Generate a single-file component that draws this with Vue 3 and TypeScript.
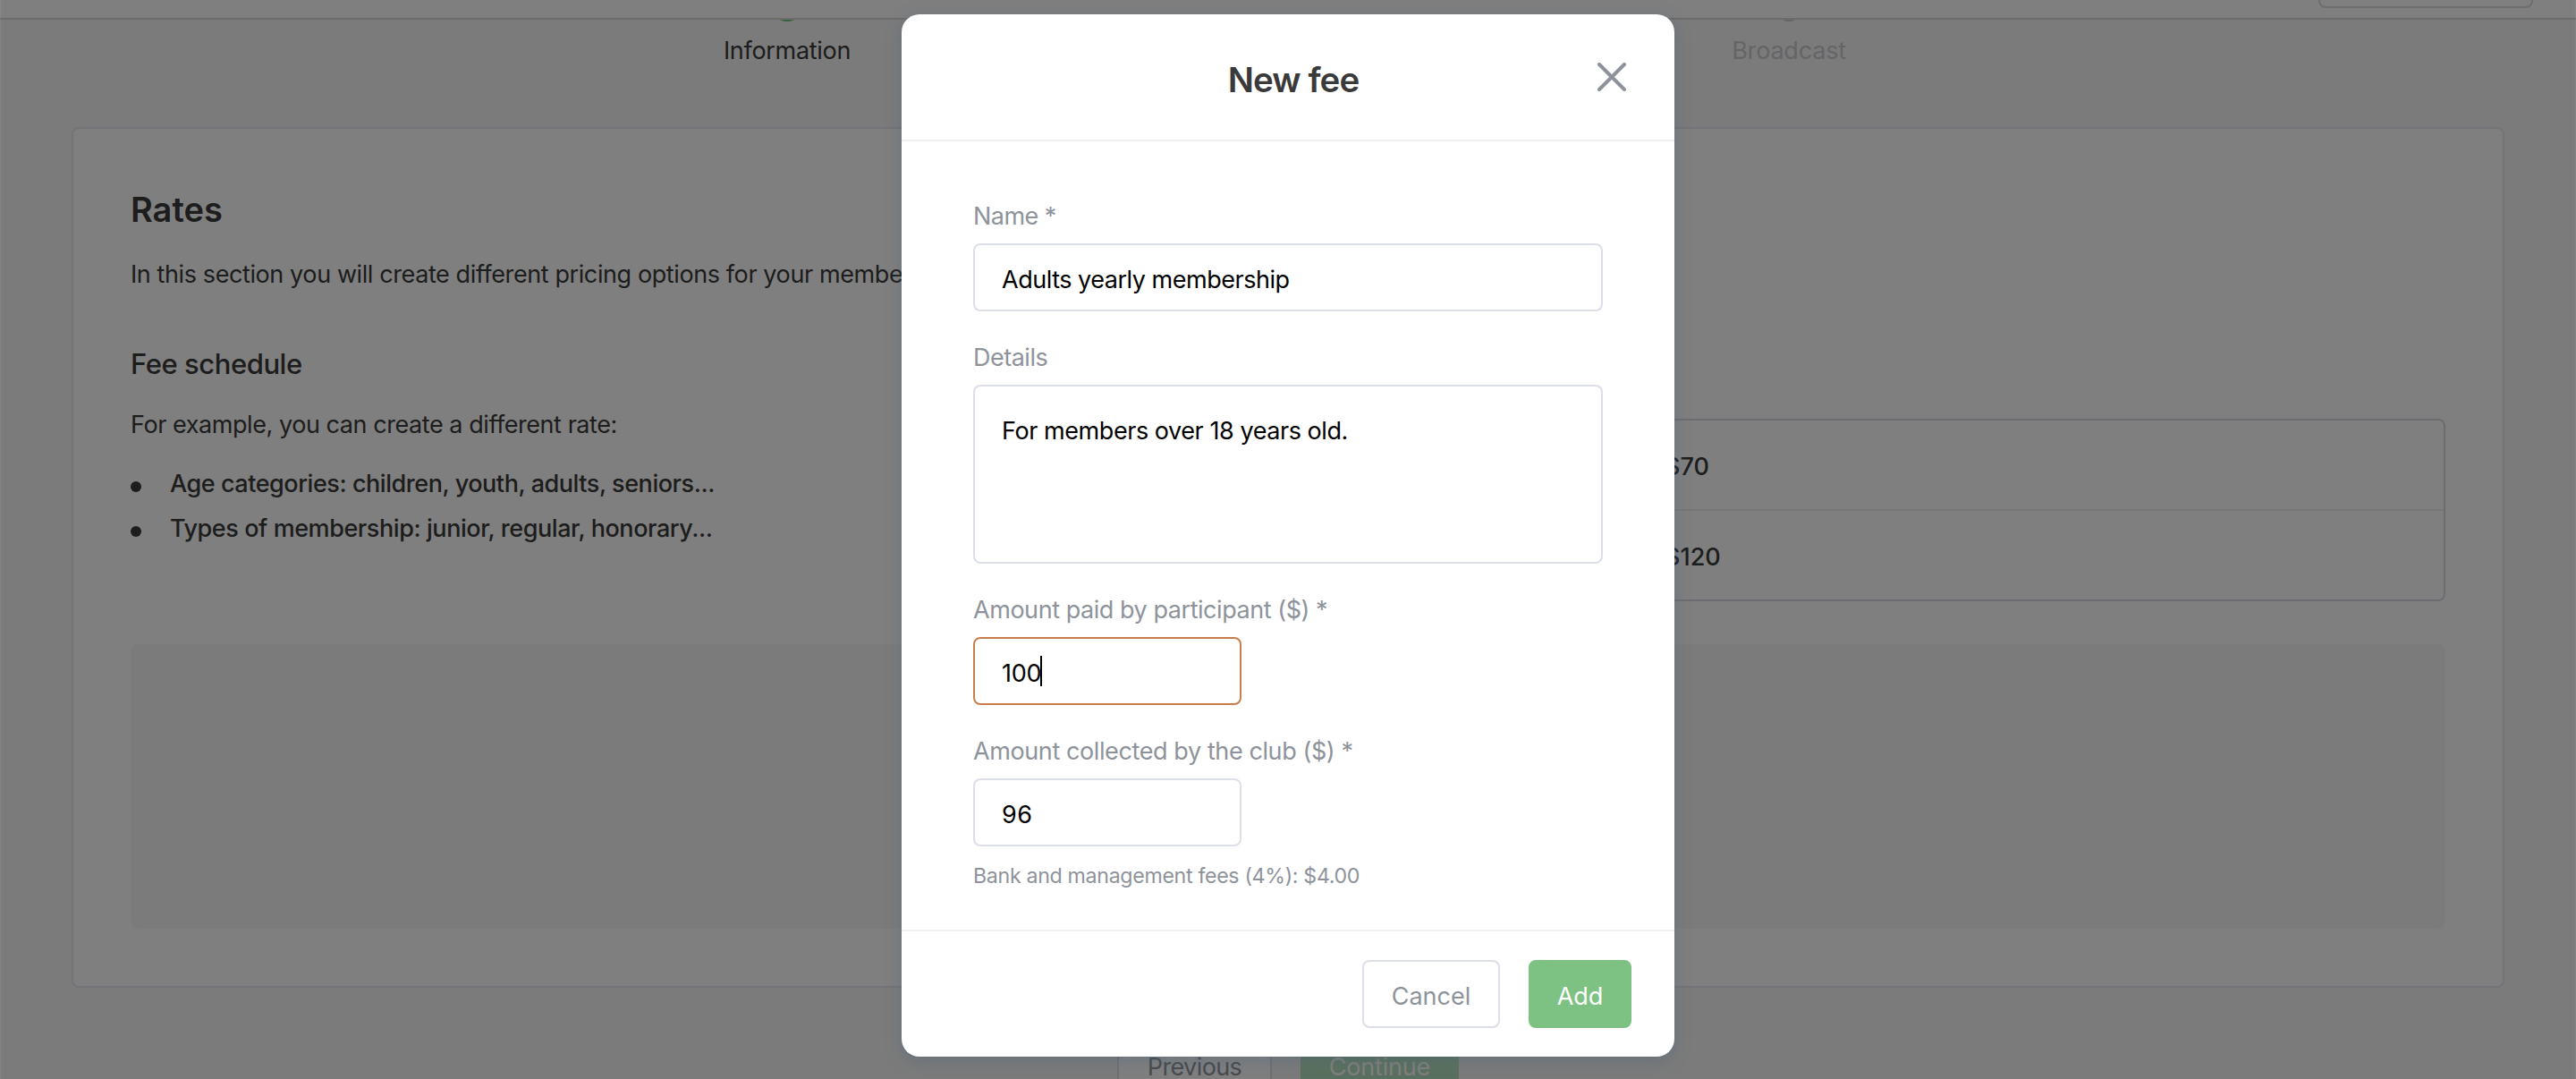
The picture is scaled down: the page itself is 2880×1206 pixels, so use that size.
<script setup lang="ts">
interface Step { label: string; tone: string; spacing: string }
interface Field {
  label: string
  value: string
  kind: 'text' | 'area' | 'amount'
  focused?: boolean
  labelSpacing: string
  valueSpacing: string
}

const steps: Step[] = [
  { label: 'Information', tone: 'done', spacing: '-0.3px' },
  { label: '', tone: 'current', spacing: '0px' },
  { label: 'Broadcast', tone: 'upcoming', spacing: '-0.2px' },
]

const examples = [
  { text: 'Age categories: children, youth, adults, seniors...', spacing: '-0.45px' },
  { text: 'Types of membership: junior, regular, honorary...', spacing: '-0.43px' },
]

const prices: string[] = ['$70', '$120']

const fields: Field[] = [
  { label: 'Name *', value: 'Adults yearly membership', kind: 'text', labelSpacing: '-0.55px', valueSpacing: '-0.48px' },
  { label: 'Details', value: 'For members over 18 years old.', kind: 'area', labelSpacing: '-0.5px', valueSpacing: '-0.44px' },
  { label: 'Amount paid by participant ($) *', value: '100', kind: 'amount', focused: true, labelSpacing: '-0.45px', valueSpacing: '-0.2px' },
  { label: 'Amount collected by the club ($) *', value: '96', kind: 'amount', labelSpacing: '-0.4px', valueSpacing: '0.6px' },
]
</script>

<template>
  <div class="page">
    <header class="topbar"><div class="topbar-button"></div></header>

    <nav class="stepper">
      <div v-for="(s, i) in steps" :key="i" class="step" :class="s.tone">
        <span class="step-dot"></span>
        <span class="step-label" :style="{ letterSpacing: s.spacing }">{{ s.label }}</span>
      </div>
    </nav>

    <main class="card">
      <h1>Rates</h1>
      <p class="intro">In this section you will create different pricing options for your members.</p>
      <div class="schedule">
        <section class="explain">
          <h2>Fee schedule</h2>
          <p>For example, you can create a different rate:</p>
          <ul>
            <li v-for="e in examples" :key="e.text" :style="{ letterSpacing: e.spacing }">{{ e.text }}</li>
          </ul>
        </section>
        <div class="table">
          <div v-for="p in prices" :key="p" class="row">{{ p }}</div>
        </div>
      </div>
      <div class="panel"></div>
    </main>

    <div class="actions">
      <button class="btn previous">Previous</button>
      <button class="btn continue">Continue</button>
    </div>

    <div class="overlay">
      <div class="modal" role="dialog">
        <div class="modal-head">
          <h3>New fee</h3>
          <svg class="close" viewBox="0 0 32 32" width="32" height="32">
            <path d="M2 2 30 30M30 2 2 30" fill="none" stroke="#8e939b" stroke-width="4" stroke-linecap="round" />
          </svg>
        </div>
        <div class="modal-body">
          <div v-for="f in fields" :key="f.label" class="field">
            <label :style="{ letterSpacing: f.labelSpacing }">{{ f.label }}</label>
            <div class="control" :class="[f.kind, { focused: f.focused }]">
              <span :style="{ letterSpacing: f.valueSpacing }">{{ f.value }}</span>
              <i v-if="f.focused" class="caret"></i>
            </div>
          </div>
          <p class="hint">Bank and management fees (4%): $4.00</p>
        </div>
        <div class="modal-foot">
          <button class="btn cancel">Cancel</button>
          <button class="btn add">Add</button>
        </div>
      </div>
    </div>
  </div>
</template>

<style>
body { margin: 0; }
</style>

<style scoped>
* { box-sizing: border-box; }
.page {
  position: relative;
  width: 2880px;
  height: 1206px;
  overflow: hidden;
  background: #f7f7f7;
  color: #3a3a3a;
  font: 400 27px/40px Inter, "Liberation Sans", sans-serif;
}
h1, h2, h3, p, ul { margin: 0; padding: 0; }

.topbar {
  display: flex;
  justify-content: flex-end;
  align-items: flex-end;
  height: 22px;
  padding: 0 48px 11px 0;
  overflow: hidden;
  background: #fff;
  border-bottom: 2px solid #d8d8d8;
}
.topbar-button {
  flex: none;
  width: 240px;
  height: 76px;
  border: 2px solid #dadae3;
  border-radius: 8px;
}

.stepper {
  display: flex;
  justify-content: center;
  height: 120px;
  overflow: hidden;
}
.step {
  display: flex;
  flex-direction: column;
  align-items: center;
  width: 560px;
}
.step-dot {
  flex: none;
  width: 34px;
  height: 34px;
  margin-top: -32px;
  border-radius: 50%;
  background: #c9cacf;
}
.done .step-dot { background: #6fbf78; }
.step-label { margin-top: 13px; }
.upcoming .step-label { color: #c9cacf; }

.card {
  height: 962px;
  margin: 0 80px;
  padding: 66px 64px 0;
  background: #fff;
  border: 2px solid #e7e7ee;
  border-radius: 8px;
}
h1 {
  font-size: 38px;
  line-height: 48px;
  font-weight: 600;
  letter-spacing: 0;
}
.intro {
  margin-top: 29px;
  letter-spacing: -0.4px;
  white-space: nowrap;
}
.schedule {
  display: flex;
  justify-content: space-between;
  margin-top: 59px;
}
.explain { padding-top: 1px; }
h2 {
  font-size: 31px;
  line-height: 40px;
  font-weight: 550;
  letter-spacing: -0.45px;
}
.explain p { margin-top: 28px; letter-spacing: -0.44px; }
ul {
  display: flex;
  flex-direction: column;
  gap: 10px;
  margin-top: 26px;
  list-style: none;
}
li {
  display: flex;
  align-items: center;
  font-weight: 500;
}
li::before {
  content: "";
  width: 12px;
  height: 12px;
  margin: 6px 32px 0 0;
  border-radius: 50%;
  background: #3a3a3a;
}
.table {
  width: 1294px;
  height: 204px;
  margin-top: 82px;
  border: 2px solid #dadae3;
  border-radius: 8px;
}
.row {
  height: 99px;
  padding: 32px 0 0 419px;
  font-weight: 500;
}
.row:first-child {
  height: 101px;
  border-bottom: 2px solid #efeff2;
}
.panel {
  height: 318px;
  margin-top: 48px;
  border-radius: 8px;
  background: #f7f7f7;
}

.btn {
  display: flex;
  justify-content: center;
  align-items: center;
  height: 76px;
  padding: 6px 0 0;
  font: inherit;
  color: #8e939b;
  background: #fff;
  border: 2px solid #dcdfe7;
  border-radius: 8px;
}
.actions {
  display: flex;
  justify-content: center;
  gap: 32px;
  margin-top: 48px;
}
.previous { width: 173px; letter-spacing: -0.6px; }
.continue {
  width: 177px;
  color: #fff;
  background: #b4e0bc;
  border-color: #b4e0bc;
  letter-spacing: -0.2px;
}

.overlay {
  position: absolute;
  inset: 0;
  display: flex;
  justify-content: center;
  align-items: flex-start;
  padding-top: 16px;
  background: rgba(0, 0, 0, 0.5);
  border: 0 solid rgba(255, 255, 255, 0.07);
  border-width: 0 1px;
}
.modal {
  width: 864px;
  background: #fff;
  border-radius: 20px;
  box-shadow: 0 4px 18px rgba(80, 102, 122, 0.45);
}
.modal-head {
  display: grid;
  grid-template-columns: 1fr auto 1fr;
  height: 142px;
  padding-right: 54px;
  padding-left: 54px;
  border-bottom: 2px solid #eef0f5;
}
h3 {
  grid-column: 2;
  margin: 49px 0 0 12px;
  font-size: 38.5px;
  line-height: 48px;
  font-weight: 600;
  letter-spacing: -0.9px;
}
.close {
  justify-self: end;
  margin-top: 54px;
}
.modal-body { padding: 64px 80px 44px; }
.field {
  display: flex;
  flex-direction: column;
  margin-bottom: 32px;
}
label { margin-bottom: 10px; color: #8e939b; }
.control {
  display: flex;
  align-items: center;
  height: 76px;
  padding: 6px 30px 0;
  color: #000;
  border: 2px solid #dcdfe7;
  border-radius: 8px;
}
.area {
  align-items: flex-start;
  height: 200px;
  padding-top: 30px;
}
.amount { width: 300px; }
.focused { border-color: #c97e4b; }
.caret {
  width: 2px;
  height: 34px;
  margin: -6px 0 0 -1px;
  background: #000;
}
.hint {
  margin-top: -15px;
  font-size: 23.2px;
  line-height: 32px;
  color: #8e939b;
  letter-spacing: -0.33px;
}
.modal-foot {
  display: flex;
  justify-content: flex-end;
  gap: 32px;
  padding: 32px 48px;
  border-top: 2px solid #f0f0f7;
}
.cancel { width: 154px; }
.add {
  width: 115px;
  color: #fff;
  background: #7dc283;
  border-color: #7dc283;
}
</style>
